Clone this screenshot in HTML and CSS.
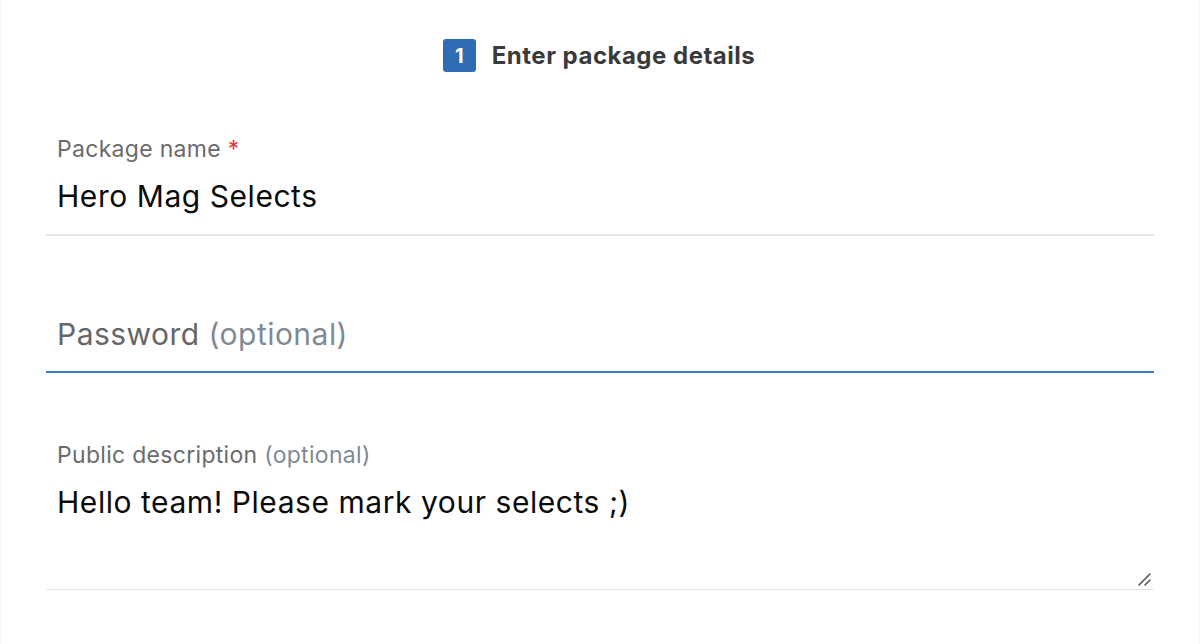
FILE: index.html
```html
<!DOCTYPE html>
<html lang="en">
<head>
<meta charset="utf-8">
<title>Enter package details</title>
<link rel="stylesheet" href="styles.css">
</head>
<body>
<div class="panel">
  <div class="step">
    <span class="badge">1</span>
    <h1 class="step-title">Enter package details</h1>
  </div>

  <div class="field field-name">
    <div class="label">Package name <span class="req">*</span></div>
    <div class="value">Hero Mag Selects</div>
  </div>

  <div class="field field-pass">
    <div class="placeholder">Password <span class="opt">(optional)</span></div>
  </div>

  <div class="field field-desc">
    <div class="label">Public description <span class="opt">(optional)</span></div>
    <div class="value">Hello team! Please mark your selects ;)</div>
    <svg class="grip" width="14" height="14" viewBox="0 0 14 14">
      <path d="M2 13 L13 2 M8 13 L13 8" stroke="#555" stroke-width="1.6" stroke-linecap="round" fill="none"/>
    </svg>
  </div>
</div>
</body>
</html>
```
FILE: styles.css
```css
* { box-sizing: border-box; }
html, body { margin: 0; padding: 0; background: #fff; }
body { font-family: Inter, "Liberation Sans", sans-serif; }

.panel {
  height: 644px;
  padding: 39px 45px 0;
  border-left: 1px solid #f4f4f4;
  border-right: 1px solid #f4f4f4;
}

.step {
  display: flex;
  justify-content: center;
  align-items: center;
  gap: 16px;
  height: 33px;
  padding-right: 2px;
}
.badge {
  width: 33px;
  height: 33px;
  border-radius: 3px;
  background: #2e6db4;
  color: #fff;
  font-weight: 700;
  font-size: 20px;
  display: flex;
  align-items: center;
  justify-content: center;
}
.step-title {
  margin: 0;
  font-size: 24px;
  font-weight: 700;
  letter-spacing: 0.5px;
  color: #3a3a3a;
}

.field {
  padding: 0 11px;
  position: relative;
}
.label {
  font-size: 23px;
  line-height: 24px;
  letter-spacing: 0.3px;
  color: #6b6b6b;
}
.req { color: #d9363e; }
.opt { color: #7f8a94; }
.value {
  font-size: 30px;
  line-height: 36px;
  letter-spacing: 0.55px;
  color: #0a0a0a;
  margin-top: 17px;
}

.field-name {
  margin-top: 65px;
  padding-bottom: 20px;
  border-bottom: 2px solid #e6e6e6;
}
.field-pass {
  padding-top: 80px;
  padding-bottom: 19px;
  border-bottom: 2px solid #3f78c2;
}
.placeholder {
  font-size: 30px;
  line-height: 36px;
  letter-spacing: 0.47px;
  color: #666;
}
.field-desc {
  padding-top: 70px;
  height: 217px;
  border-bottom: 1px solid #e3e3e3;
}
.grip {
  position: absolute;
  right: 3px;
  bottom: 3px;
}
```
